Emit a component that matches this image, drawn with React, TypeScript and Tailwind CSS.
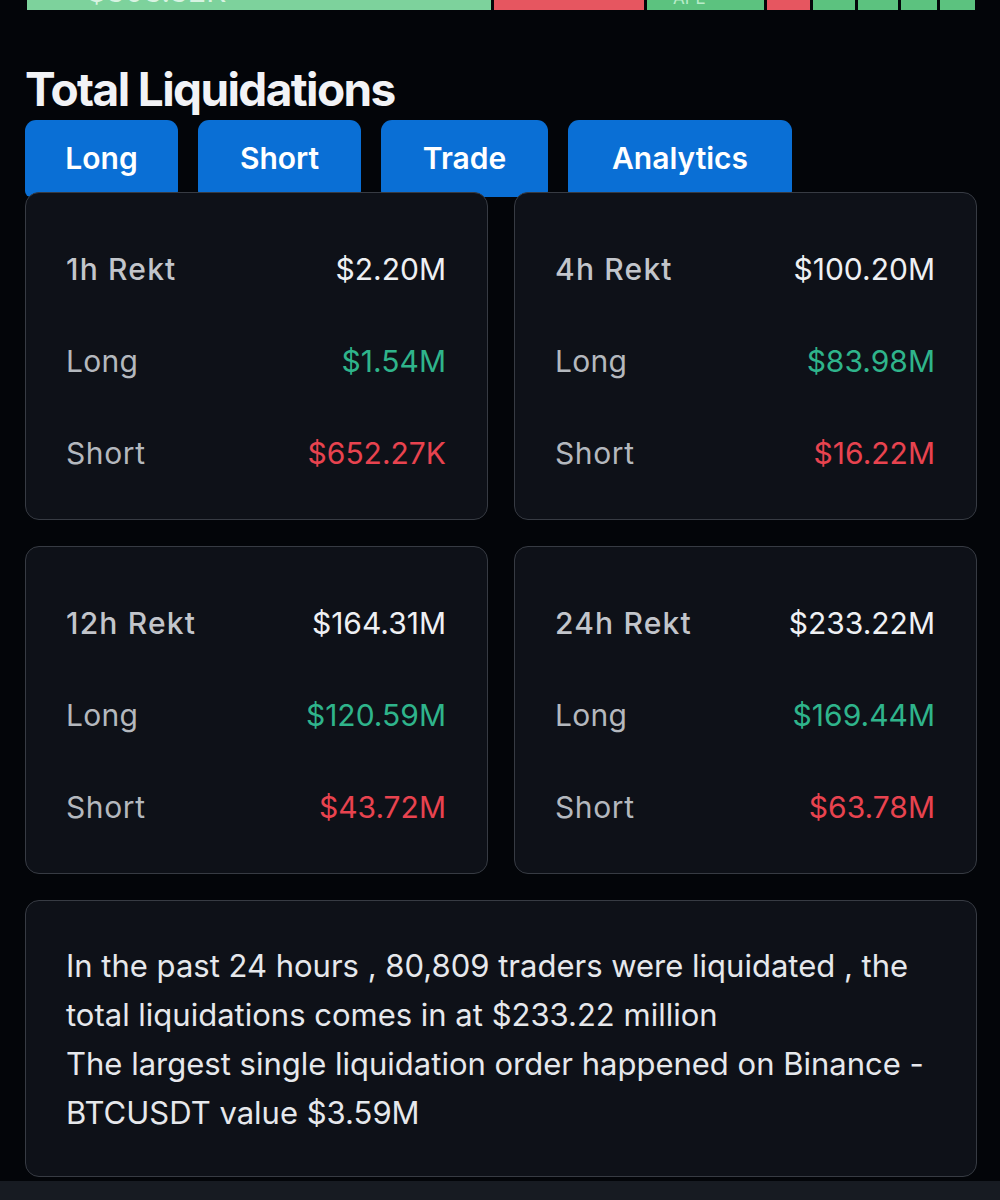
import React from "react";

type Stat = { title: string; total: string; long: string; short: string };

const stats: Stat[] = [
  { title: "1h Rekt", total: "$2.20M", long: "$1.54M", short: "$652.27K" },
  { title: "4h Rekt", total: "$100.20M", long: "$83.98M", short: "$16.22M" },
  { title: "12h Rekt", total: "$164.31M", long: "$120.59M", short: "$43.72M" },
  { title: "24h Rekt", total: "$233.22M", long: "$169.44M", short: "$63.78M" },
];

function StatCard({ s }: { s: Stat }) {
  return (
    <div className="rounded-[14px] border border-[#373b43] bg-[#0e1118] pl-[40px] pr-[41px] pt-[30px] pb-[20px]">
      <div className="flex h-[92px] items-center justify-between">
        <span className="font-medium tracking-[0.04em] text-[#c2c5cb]">{s.title}</span>
        <span className="text-[#eef0f3]">{s.total}</span>
      </div>
      <div className="flex h-[92px] items-center justify-between">
        <span className="tracking-[0.01em] text-[#b4b8be]">Long</span>
        <span className="text-[#2fb48b]">{s.long}</span>
      </div>
      <div className="flex h-[92px] items-center justify-between">
        <span className="tracking-[0.02em] text-[#b4b8be]">Short</span>
        <span className="text-[#e8434f]">{s.short}</span>
      </div>
    </div>
  );
}

export default function App() {
  const tabs = [
    { label: "Long", w: "w-[153px]" },
    { label: "Short", w: "w-[163px]" },
    { label: "Trade", w: "w-[167px]" },
    { label: "Analytics", w: "w-[224px]" },
  ];
  return (
    <div
      className="flex min-h-[1200px] w-[1000px] flex-col bg-[#030509]"
      style={{ fontFamily: "Inter, 'Noto Sans', sans-serif" }}
    >
      {/* heatmap strip remnant */}
      <div className="flex h-[10px] gap-[3px] overflow-hidden pl-[27px]">
        <div className="relative w-[464px] overflow-hidden bg-[#7dd29c]">
          <span className="absolute left-[60px] top-[-24px] text-[30px] leading-[30px] text-[#d8f3e2]">$303.32K</span>
        </div>
        <div className="w-[150px] bg-[#e65660]"></div>
        <div className="relative w-[117px] overflow-hidden bg-[#5cc27f]">
          <span className="absolute left-[26px] top-[-10px] text-[17px] leading-[17px] text-[#b8ecc9]">APE</span>
        </div>
        <div className="w-[43px] bg-[#e65660]"></div>
        <div className="w-[42px] bg-[#5cc27f]"></div>
        <div className="w-[40px] bg-[#5cc27f]"></div>
        <div className="w-[36px] bg-[#5cc27f]"></div>
        <div className="w-[35px] bg-[#5cc27f]"></div>
      </div>

      <div className="pl-[25px] pr-[23px]">
        <h1 className="mt-[56px] text-[46px] font-bold leading-[46px] tracking-[-0.035em] text-[#f2f3f6]">
          Total Liquidations
        </h1>

        <div className="mt-[8px] flex gap-[20px]">
          {tabs.map((t) => (
            <div
              key={t.label}
              className={`${t.w} flex h-[77px] justify-center rounded-t-[11px] rounded-b-[6px] bg-[#0a6fd5] pt-[20px] text-[30px] font-semibold leading-[36px] text-white`}
            >
              {t.label}
            </div>
          ))}
        </div>

        <div className="relative z-10 -mt-[5px] grid grid-cols-2 gap-[26px] text-[30px] leading-[36px]">
          {stats.map((s) => (
            <StatCard key={s.title} s={s} />
          ))}
        </div>

        <div className="mt-[26px] rounded-[14px] border border-[#373b43] bg-[#0e1118] px-[40px] pt-[40px] pb-[39px] text-[31px] leading-[49px] text-[#e6e8ec]">
          <div className="whitespace-nowrap">In the past 24 hours , 80,809 traders were liquidated , the</div>
          <div className="whitespace-nowrap">total liquidations comes in at $233.22 million</div>
          <div className="whitespace-nowrap">The largest single liquidation order happened on Binance -</div>
          <div className="whitespace-nowrap">BTCUSDT value $3.59M</div>
        </div>
      </div>

      <div className="mt-[4px] flex-1 bg-[#171b22]"></div>
    </div>
  );
}
